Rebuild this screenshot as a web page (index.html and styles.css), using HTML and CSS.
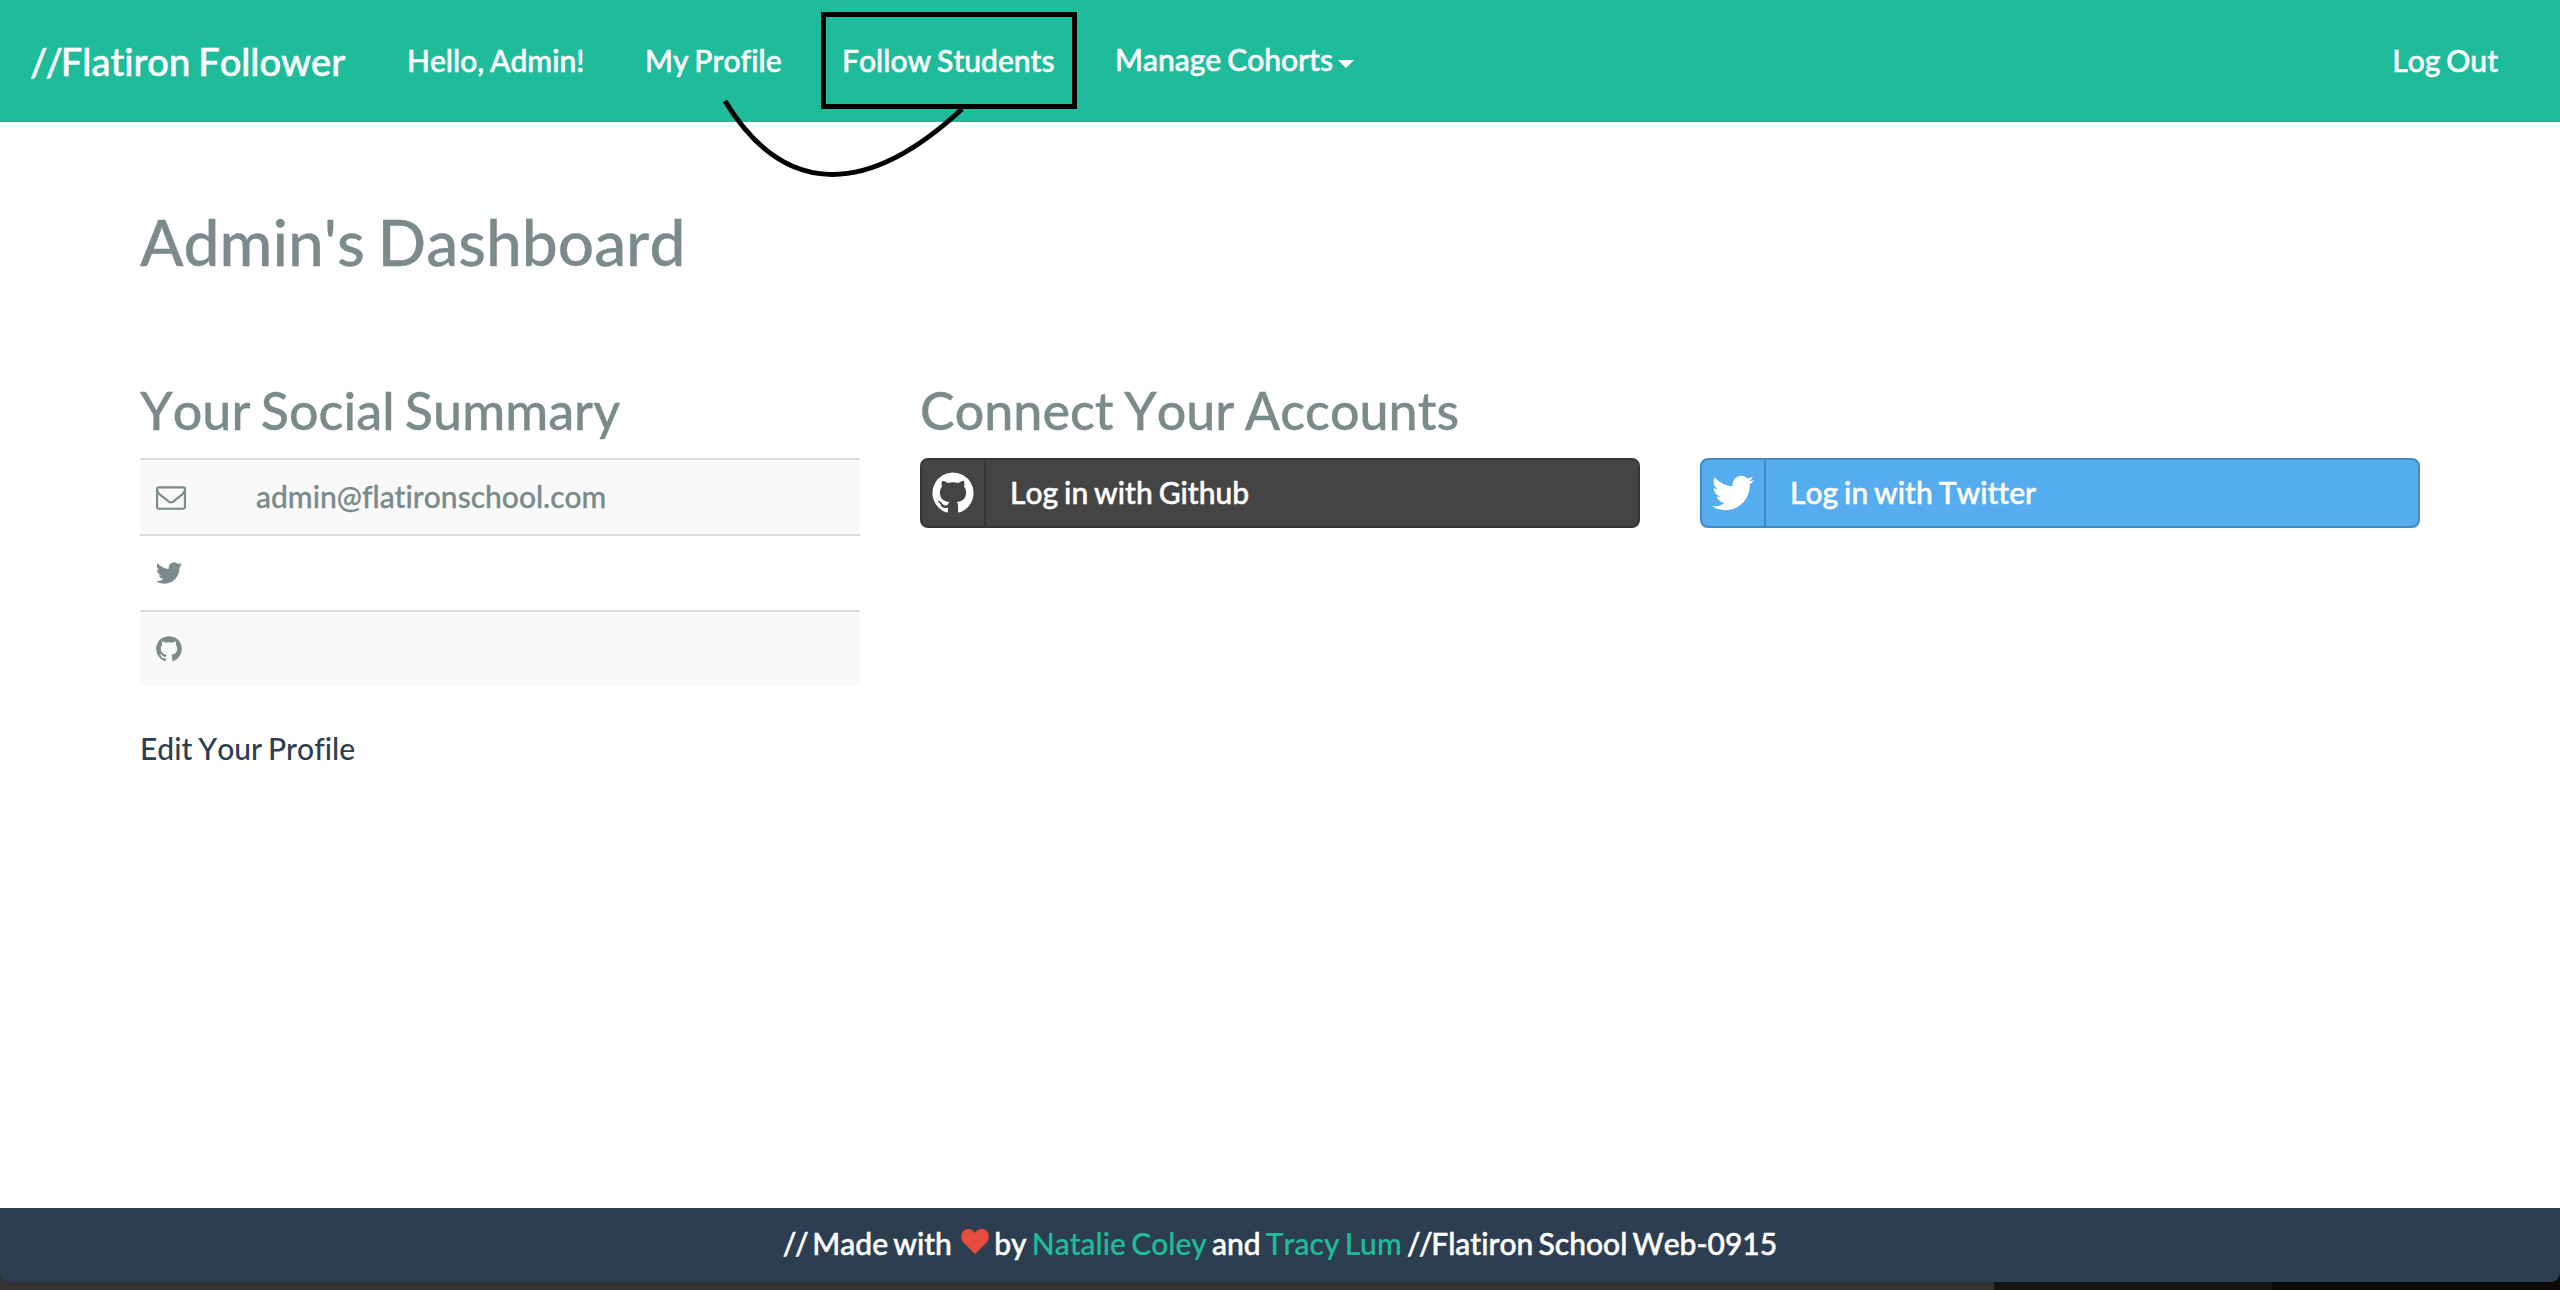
FILE: index.html
```html
<!DOCTYPE html>
<html lang="en">
<head>
<meta charset="utf-8">
<title>Flatiron Follower</title>
<link rel="stylesheet" href="styles.css">
</head>
<body>
<svg class="sprite" aria-hidden="true">
  <symbol id="twitter" viewBox="0 0 1792 1792"><path d="M1684 408q-67 98-162 167 1 14 1 42 0 130-38 259.500t-115.500 248.500-184.500 210.500-258 146-323 54.500q-271 0-496-145 35 4 78 4 225 0 401-138-105-2-188-64.500t-114-159.500q33 5 61 5 43 0 85-11-112-23-185.500-111.500t-73.500-205.500v-4q68 38 146 41-66-44-105-115t-39-154q0-88 44-163 121 149 294.500 238.500t371.500 99.500q-8-38-8-74 0-134 94.500-228.500t228.500-94.500q140 0 236 102 109-21 205-78-37 115-142 178 93-10 186-50z"/></symbol>
  <symbol id="github" viewBox="0 0 1792 1792"><path d="M896 128q209 0 385.500 103t279.500 279.500 103 385.500q0 251-146.500 451.500t-378.500 277.500q-27 5-40-7t-13-30q0-3 .5-76.500t.5-134.500q0-97-52-142 57-6 102.500-18t94-39 81-66.500 53-105 20.500-150.500q0-119-79-206 37-91-8-204-28-9-81 11t-92 44l-38 24q-93-26-192-26t-192 26q-16-11-42.500-27t-83.500-38.500-85-13.500q-45 113-8 204-79 87-79 206 0 85 20.500 150t52.500 105 80.500 67 94 39 102.500 18q-39 36-49 103-21 10-45 15t-57 5-65.500-21.500-55.500-62.500q-19-32-48.500-52t-49.500-24l-20-3q-21 0-29 4.500t-5 11.500 9 14 13 12l7 5q22 10 43.500 38t31.500 51l10 23q13 38 44 61.500t67 30 69.500 7 55.500-3.500l23-4q0 38 .5 88.500t.5 54.500q0 18-13 30t-40 7q-232-77-378.500-277.500t-146.500-451.500q0-209 103-385.500t279.500-279.500 385.500-103z"/></symbol>
  <symbol id="mail" viewBox="0 0 1792 1792"><path d="M1664 1504v-768q-32 36-69 66-268 206-426 338-51 43-83 67t-86.500 48.500-102.500 24.500h-2q-48 0-102.500-24.500t-86.500-48.500-83-67q-158-132-426-338-37-30-69-66v768q0 13 9.500 22.500t22.500 9.500h1472q13 0 22.500-9.500t9.500-22.500zm0-1051v-24.500l-.5-13-3-12.500-5.500-9-9-7.500-14-2.500h-1472q-13 0-22.500 9.500t-9.500 22.500q0 168 147 284 193 152 401 317 6 5 35 29.500t46 37.500 44.500 31.500 50.500 27.500 43 9h2q20 0 43-9t50.500-27.500 44.500-31.500 46-37.500 35-29.500q208-165 401-317 54-43 100.500-115.500t46.500-131.500zm128-37v1088q0 66-47 113t-113 47h-1472q-66 0-113-47t-47-113v-1088q0-66 47-113t113-47h1472q66 0 113 47t47 113z"/></symbol>
</svg>
<header class="navbar">
  <a class="brand"><span class="slashes">//</span>Flatiron Follower</a>
  <nav class="nav-links">
    <a>Hello, Admin!</a>
    <a>My Profile</a>
    <a class="marked">Follow Students
      <svg class="arc" viewBox="0 0 270 90"><path d="M16 5C74 100 156 103 253 13"/></svg>
    </a>
    <a class="dropdown">Manage Cohorts<span class="caret"></span></a>
  </nav>
  <a class="logout">Log Out</a>
</header>
<main>
  <h1>Admin's Dashboard</h1>
  <div class="columns">
    <section>
      <h3>Your Social Summary</h3>
      <ul class="social">
        <li><svg class="mail"><use href="#mail"/></svg><span>admin@flatironschool.com</span></li>
        <li><svg><use href="#twitter"/></svg></li>
        <li><svg><use href="#github"/></svg></li>
      </ul>
      <a class="edit">Edit Your Profile</a>
    </section>
    <section class="accounts">
      <h3>Connect Your Accounts</h3>
      <div class="buttons">
        <a class="btn github"><span class="btn-icon"><svg><use href="#github"/></svg></span><span class="label">Log in with Github</span></a>
        <a class="btn twitter"><span class="btn-icon"><svg><use href="#twitter"/></svg></span><span class="label">Log in with Twitter</span></a>
      </div>
    </section>
  </div>
</main>
<div class="desktop">
<footer>
  <p><span class="slashes">//</span> Made with <svg class="heart" viewBox="0 0 28 25"><path d="M14 25L2 13C-1 9.500 0 4 2.500 2C6-1 11-.5 14 4C17-.5 22-1 25.500 2C28 4 29 9.500 26 13Z"/></svg> by <a>Natalie Coley</a> and <a>Tracy Lum</a> <span class="slashes">//</span>Flatiron School Web-0915</p>
</footer>
</div>
</body>
</html>
```
FILE: styles.css
```css
*, *::before { box-sizing: border-box; }
body {
  margin: 0;
  height: 1290px;
  overflow: hidden;
  display: flex;
  flex-direction: column;
  background: #fff;
  color: #7b8a8b;
  font: 30px/42px Lato, sans-serif;
  font-weight: 500;
  font-variant-ligatures: none;
  font-kerning: none;
  -webkit-text-stroke: 0.3px currentColor;
}
.sprite { display: none; }
svg { fill: currentColor; }
.slashes { letter-spacing: -0.05em; }
.navbar, h1, h3, .edit, .label { word-spacing: -0.055em; }
.navbar {
  height: 122px;
  flex: none;
  display: flex;
  align-items: flex-start;
  padding: 39px 62px 0 30px;
  background: #1fbc9c;
  color: #fff;
  white-space: nowrap;
  -webkit-text-stroke-width: 0.5px;
}
.brand { font-size: 38px; line-height: 44px; width: 377px; }
.nav-links { display: flex; gap: 60.5px; }
.marked { position: relative; }
.marked::before {
  content: "";
  position: absolute;
  left: -21px;
  top: -27px;
  width: 256px;
  height: 97px;
  border: 5px solid #000;
}
.arc {
  position: absolute;
  left: -133px;
  top: 57px;
  width: 270px;
  height: 90px;
  fill: none;
  stroke: #000;
  stroke-width: 5;
}
.dropdown { margin-top: -1px; display: flex; }
.caret {
  margin: 22px 0 0 5px;
  width: 16px;
  height: 8px;
  background: #fff;
  clip-path: polygon(0 0, 100% 0, 50% 100%);
}
.logout { margin-left: auto; }
main { width: 2280px; margin: 0 auto; flex: 1; }
h1, h3 { margin: 0; font-weight: 500; }
h1 { font-size: 64px; line-height: 70px; margin-top: 85px; }
h3 { font-size: 52px; line-height: 58px; margin-bottom: 19px; }
.columns { display: grid; grid-template-columns: 720px 1500px; gap: 60px; margin-top: 104px; }
.social { margin: 0; padding: 0; list-style: none; }
.social li {
  height: 76px;
  display: flex;
  align-items: center;
  padding-left: 14px;
  border-top: 2px solid #dcdcdc;
}
.social li:nth-child(odd) { background: #f9f9f9; }
.social svg { width: 30px; height: 30px; }
.social .mail { margin-left: 2px; }
.social span { margin-left: 70px; padding-bottom: 2px; }
.edit { display: block; margin-top: 41px; color: #2c3e50; -webkit-text-stroke-width: 0; }
.buttons { display: flex; gap: 60px; }
.btn {
  width: 720px;
  height: 70px;
  display: flex;
  border: 2px solid #363636;
  border-radius: 8px;
  background: #444;
  color: #fff;
  -webkit-text-stroke-width: 0.5px;
}
.btn-icon {
  width: 64px;
  border-right: 2px solid #363636;
  display: flex;
  align-items: center;
  justify-content: center;
}
.btn-icon svg { width: 48px; height: 48px; }
.label { padding-left: 24px; line-height: 64px; }
.btn.twitter { background: #55acee; border-color: #448abe; }
.twitter .btn-icon { border-color: #448abe; }
.desktop { height: 82px; flex: none; background: linear-gradient(90deg, #343232 0 1994px, #151514 1994px 2272px, #0c0a08 2272px); }
footer {
  height: 74px;
  padding-top: 14px;
  border-radius: 0 0 9px 9px;
  background: #2c3e50;
  color: #fff;
  text-align: center;
  -webkit-text-stroke-width: 0.5px;
}
footer p { margin: 0; word-spacing: -2.4px; }
footer a { color: #1fbc9c; -webkit-text-stroke-width: 0.2px; }
.heart { width: 28px; height: 25px; margin-left: 4px; fill: #e74c3c; stroke: none; vertical-align: 1px; }
```
